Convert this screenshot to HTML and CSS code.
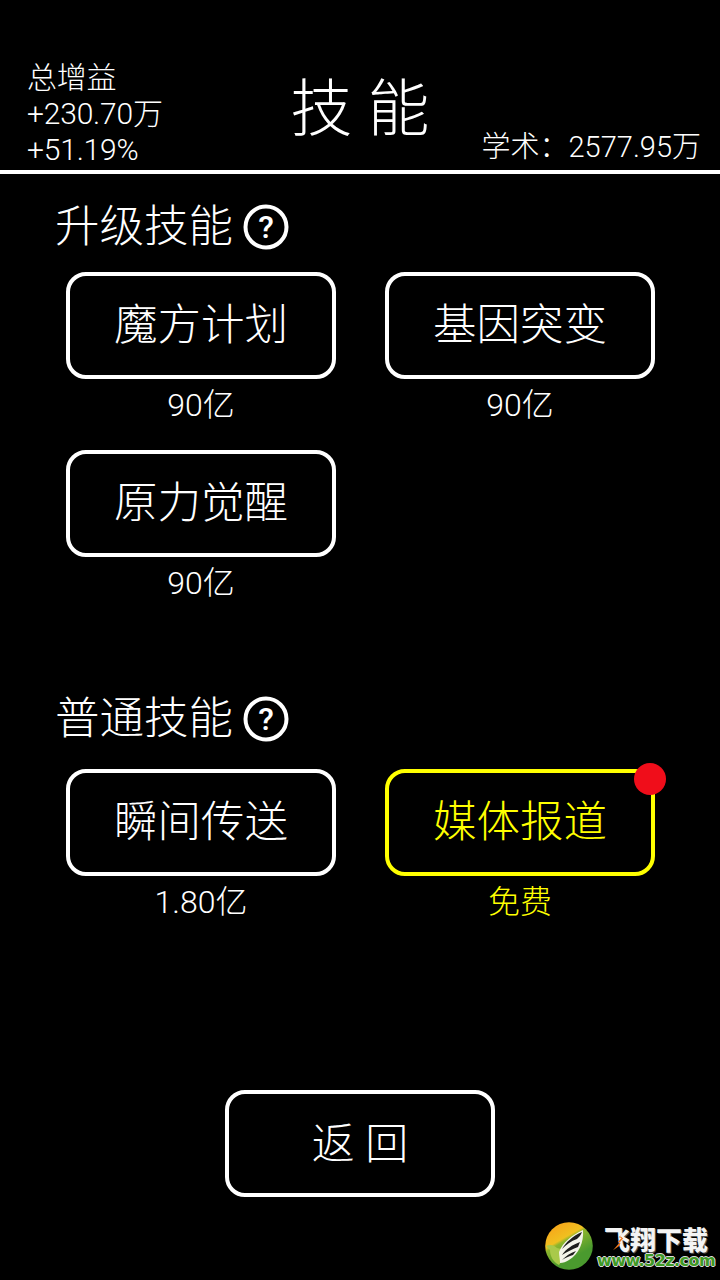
FILE: index.html
```html
<!DOCTYPE html>
<html lang="zh-CN">
<head>
<meta charset="utf-8">
<title>技能</title>
<link rel="stylesheet" href="styles.css">
</head>
<body>
<div class="screen">
  <header class="top">
    <div class="gain"><div>总增益</div><div>+230.70万</div><div>+51.19%</div></div>
    <h1 class="title">技 能</h1>
    <div class="study">学术：2577.95万</div>
  </header>
  <section class="sec sec-up">
    <h2 class="sec-title">升级技能<svg class="help" viewBox="0 0 46 46"><circle cx="23" cy="23" r="20.5" fill="none" stroke="#fff" stroke-width="4"/><text x="23" y="34" text-anchor="middle" class="help-q">?</text></svg></h2>
    <div class="grid">
      <div class="item"><div class="btn"><span class="lbl">魔方计划</span></div><div class="cost">90亿</div></div>
      <div class="item"><div class="btn"><span class="lbl">基因突变</span></div><div class="cost">90亿</div></div>
      <div class="item"><div class="btn"><span class="lbl">原力觉醒</span></div><div class="cost">90亿</div></div>
    </div>
  </section>
  <section class="sec sec-normal">
    <h2 class="sec-title">普通技能<svg class="help" viewBox="0 0 46 46"><circle cx="23" cy="23" r="20.5" fill="none" stroke="#fff" stroke-width="4"/><text x="23" y="34" text-anchor="middle" class="help-q">?</text></svg></h2>
    <div class="grid">
      <div class="item"><div class="btn"><span class="lbl">瞬间传送</span></div><div class="cost">1.80亿</div></div>
      <div class="item hot"><div class="btn"><span class="lbl">媒体报道</span><span class="dot"></span></div><div class="cost">免费</div></div>
    </div>
  </section>
  <div class="back-wrap"><div class="btn back"><span class="lbl">返 回</span></div></div>
  <div class="mark">
    <svg class="mark-logo" viewBox="0 0 48 48">
      <defs>
        <linearGradient id="lg" x1="0.2" y1="0.05" x2="0.6" y2="0.75"><stop offset="0" stop-color="#f7a61a"/><stop offset=".42" stop-color="#f0c020"/><stop offset=".5" stop-color="#8db52c"/><stop offset="1" stop-color="#4a9a2e"/></linearGradient>
      </defs>
      <circle cx="24" cy="24" r="23.8" fill="url(#lg)"/>
      <path d="M1 24c4-2 8-1 11 2l4 1c3 6 1 12-2 16-6-3-9-9-9-15z" fill="#a9c94a"/>
      <path d="M14 30C18 20 27 13 38 8c1 12-4 24-14 30-3 2-6 3-9 3 0-4-1-8-1-11z" fill="#f4f4ea"/>
      <path d="M17 27c4-7 11-13 20-17-1 3-3 5-5 7-6 2-11 6-15 10z" fill="#1d1d1d"/>
      <path d="M17 33c4-6 10-10 18-13l-2 5c-6 2-11 5-16 8z" fill="#1d1d1d"/>
      <path d="M17 38c4-4 8-7 14-9l-3 4c-4 1-8 3-11 5z" fill="#1d1d1d"/>
    </svg>
    <div class="mark-text">
      <div class="mark-cn">飞翔下载</div>
      <div class="mark-url">www.52z.com</div>
      <svg class="mark-bolt" viewBox="0 0 16 22"><path d="M15 0L6 8l5 1L0 22l7-5 1-3-3-1 5-5-3-1z" fill="#f0761a"/></svg>
    </div>
  </div>
</div>
</body>
</html>
```
FILE: styles.css
```css
* { box-sizing: border-box; margin: 0; padding: 0; }
html, body { background: #000; }
body { width: 720px; height: 1280px; overflow: hidden; color: #fff;
  font-family: Roboto, "Noto Sans CJK SC", sans-serif; font-weight: 300; }
.screen { position: relative; width: 720px; height: 1280px; }
.top { height: 174px; border-bottom: 4px solid #fff; position: relative; display: flex;
  justify-content: space-between; align-items: flex-end; padding: 0 19px 2px 27px; }
.gain { font-size: 30px; line-height: 36px; letter-spacing: -.2px; }
.title { position: absolute; left: 0; right: 0; top: 70px; text-align: center; font-size: 62px;
  line-height: 80px; font-weight: 300; }
.study { font-size: 29px; line-height: 36px; padding-bottom: 3px; }
.sec { padding-left: 55px; }
.sec-up { padding-top: 25px; height: 493px; }
.sec-normal { padding-top: 24px; height: 423px; }
.sec-title { display: flex; align-items: center; gap: 10px; font-size: 44.5px; line-height: 56px; font-weight: 300; }
.help { width: 46px; height: 46px; }
.help-q { font: 500 32px Roboto, sans-serif; fill: #fff; }
.grid { display: grid; grid-template-columns: 270px 270px; column-gap: 49px; row-gap: 24px;
  margin: 17px 0 0 11px; }
.sec-normal .grid { margin-top: 22px; }
.btn { position: relative; width: 270px; height: 107px; border: 4px solid currentColor; border-radius: 20px;
  display: flex; align-items: center; justify-content: center; font-size: 43.5px; }
.lbl { display: block; line-height: 56px; }
.cost { text-align: center; font-size: 32px; line-height: 47px; height: 47px; padding-top: 3px; }
.hot { color: #ff0; }
.dot { position: absolute; top: -10px; right: -15px; width: 32px; height: 32px; border-radius: 50%; background: #f00d1a; }
.back-wrap { display: flex; justify-content: center; }
.back { font-size: 43px; }
.mark { position: absolute; right: 11px; bottom: 10px; display: flex; align-items: center; gap: 10px; }
.mark-logo { width: 48px; height: 48px; }
.mark-text { position: relative; width: 106px; display: flex; flex-direction: column; align-items: center; }
.mark-cn { font: 900 26px/28px "Noto Sans CJK SC", sans-serif; color: #f4f4f4; white-space: nowrap; text-shadow: 1px 1px 0 #555; }
.mark-url { font: 700 16px/15px "DejaVu Sans", sans-serif; letter-spacing: -.55px; color: #3f9a25; white-space: nowrap;
  text-shadow: -1px 0 0 #ddd, 1px 0 0 #ddd, 0 -1px 0 #ddd, 0 1px 0 #ddd; }
.mark-bolt { position: absolute; left: 10px; top: 4px; width: 15px; height: 22px; }
```
